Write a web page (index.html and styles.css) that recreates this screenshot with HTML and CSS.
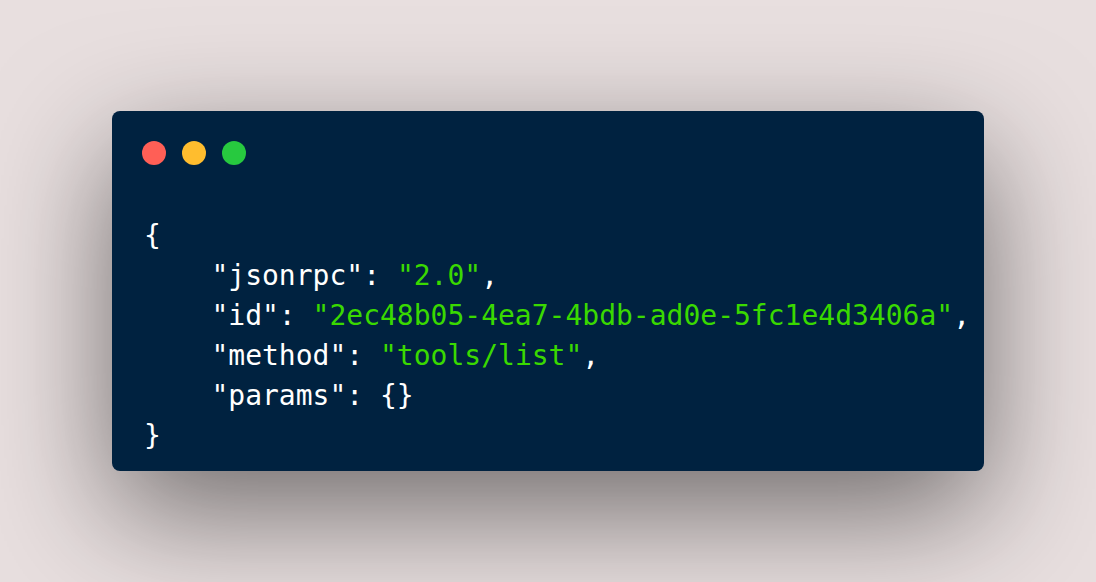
FILE: index.html
```html
<!DOCTYPE html>
<html lang="en">
<head>
<meta charset="utf-8">
<title>JSON-RPC request</title>
<link rel="stylesheet" href="styles.css">
</head>
<body>
<div class="stage">
  <div class="window">
    <div class="controls">
      <span class="dot red"></span>
      <span class="dot yellow"></span>
      <span class="dot green"></span>
    </div>
<pre class="code">{
    "jsonrpc": <span class="str">"2.0"</span>,
    "id": <span class="str">"2ec48b05-4ea7-4bdb-ad0e-5fc1e4d3406a"</span>,
    "method": <span class="str">"tools/list"</span>,
    "params": {}
}</pre>
  </div>
</div>
</body>
</html>
```
FILE: styles.css
```css
html, body {
  margin: 0;
  padding: 0;
  height: 100%;
}
body {
  background: #e8dfdf;
}
.stage {
  height: 100vh;
  display: flex;
  align-items: center;
  justify-content: center;
}
.window {
  width: 872px;
  height: 360px;
  box-sizing: border-box;
  background: #002240;
  border-radius: 8px;
  box-shadow: 0 41px 122px rgba(0, 0, 0, 0.52);
  padding: 30px 30px 0 30px;
  display: flex;
  flex-direction: column;
}
.controls {
  display: flex;
  gap: 16px;
  height: 24px;
}
.dot {
  width: 24px;
  height: 24px;
  border-radius: 50%;
  display: block;
}
.red { background: #ff5f56; }
.yellow { background: #ffbd2e; }
.green { background: #27c93f; }
.code {
  margin: 51px 0 0 2px;
  font-family: "DejaVu Sans Mono", monospace;
  font-size: 28px;
  line-height: 40px;
  color: #ffffff;
  white-space: pre;
}
.str { color: #3ad900; }
```
